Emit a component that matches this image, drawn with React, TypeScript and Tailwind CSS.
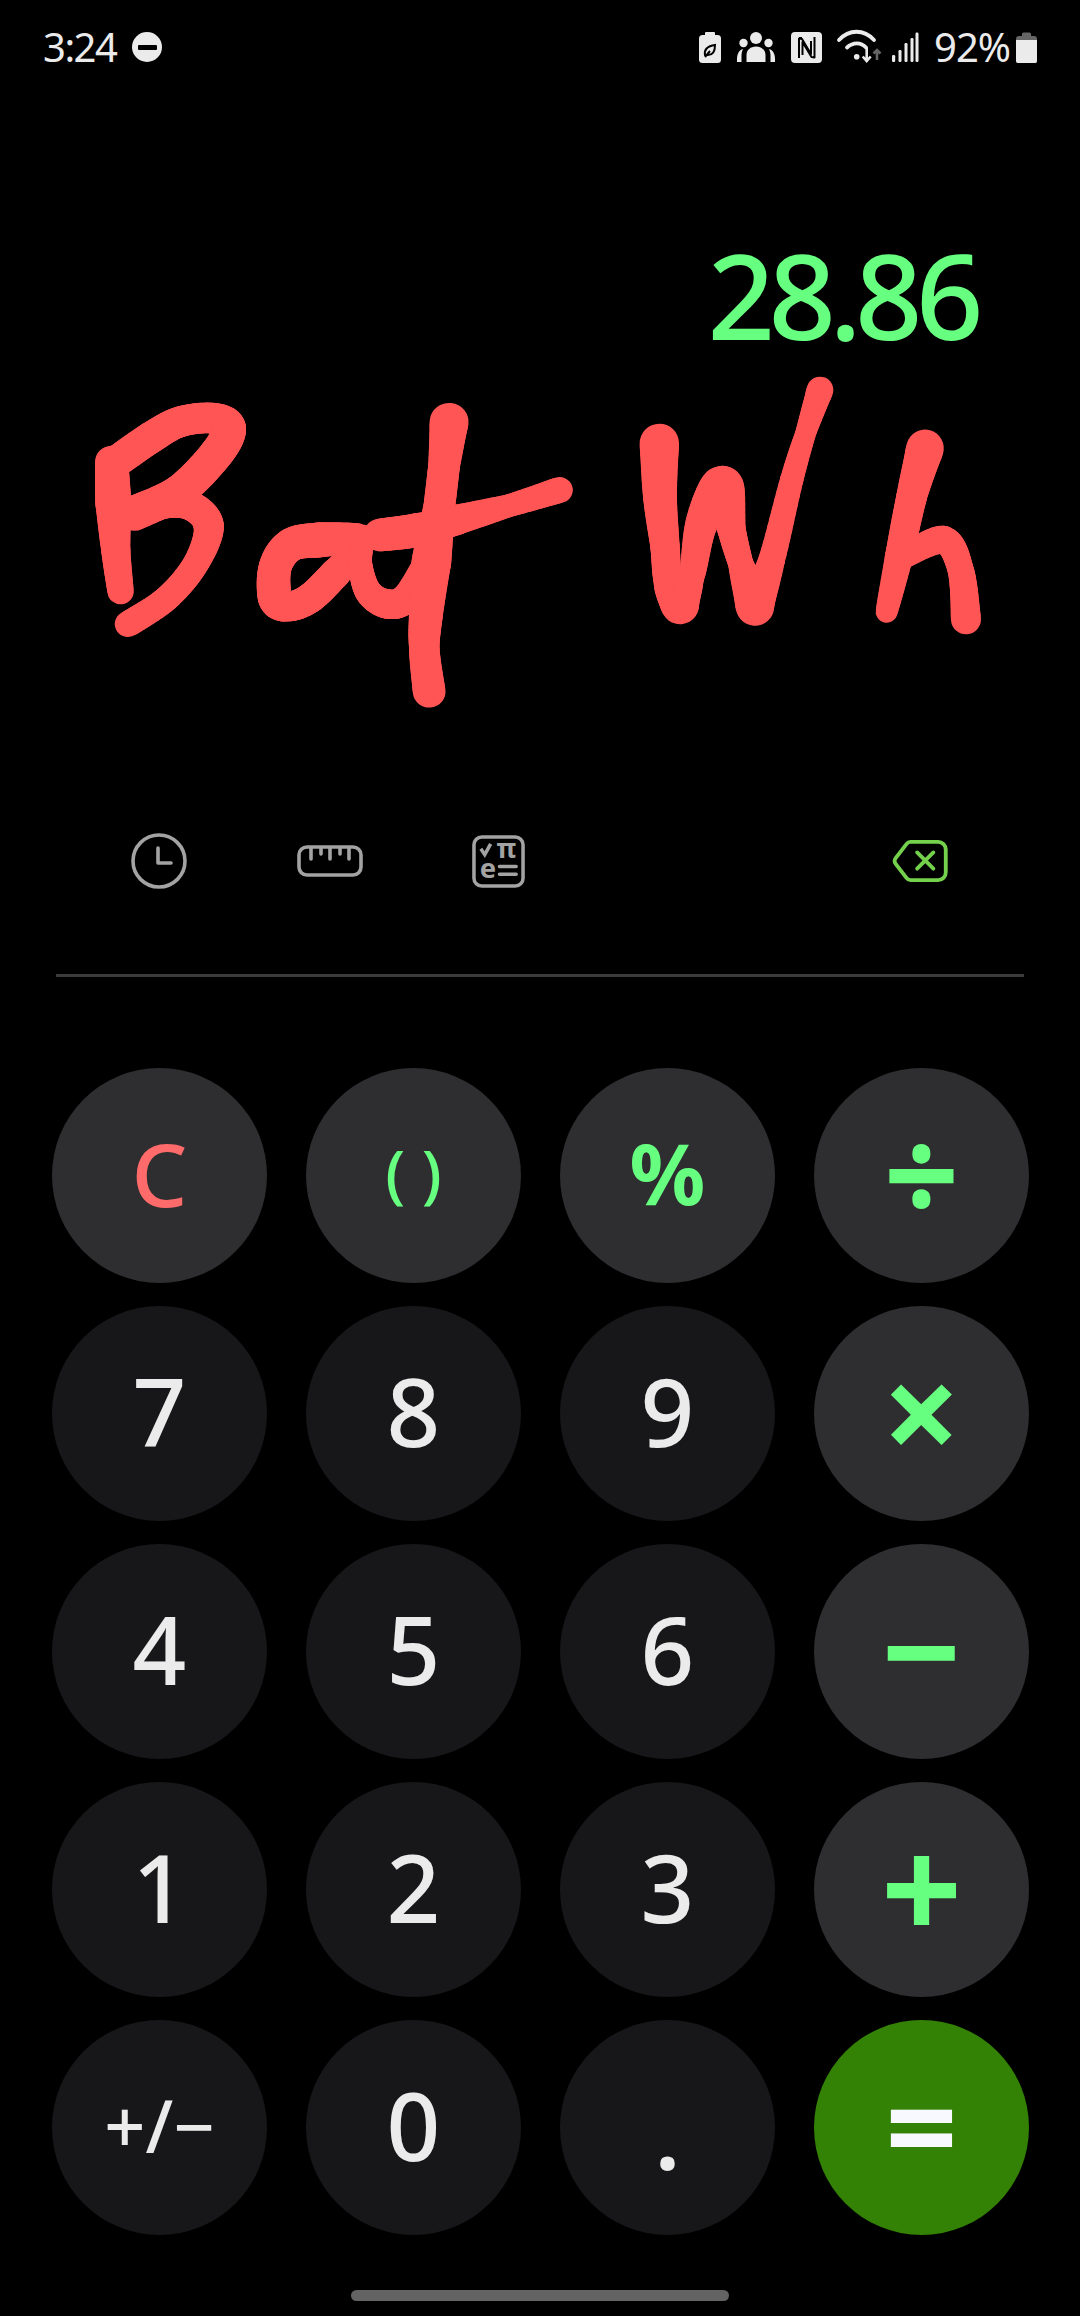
import React from 'react';

type Pt = [number, number, number];

// freehand pen stroke: catmull-rom through the points, width varies along it
function Ink({ pts }: { pts: Pt[] }) {
  const out: React.ReactNode[] = [];
  const at = (i: number) => pts[Math.max(0, Math.min(pts.length - 1, i))];
  let last: [number, number] | null = null;
  for (let i = 0; i < pts.length - 1; i++) {
    const [a, b, c, d] = [at(i - 1), at(i), at(i + 1), at(i + 2)];
    for (let s = 0; s <= 10; s++) {
      const t = s / 10;
      const f = (k: number) =>
        0.5 * (2 * b[k] + (c[k] - a[k]) * t + (2 * a[k] - 5 * b[k] + 4 * c[k] - d[k]) * t * t + (3 * b[k] - a[k] - 3 * c[k] + d[k]) * t * t * t);
      const x = f(0);
      const y = f(1);
      const w = b[2] + (c[2] - b[2]) * t;
      if (last) out.push(<line key={`${i}-${s}`} x1={last[0]} y1={last[1]} x2={x} y2={y} strokeWidth={w} />);
      last = [x, y];
    }
  }
  return <g stroke="#ff5555" strokeLinecap="round" fill="none">{out}</g>;
}

function Bat() {
  return (
    <svg className="absolute left-[60px] top-[256px] w-[540px] h-[380px]" viewBox="0 0 1568 1140" preserveAspectRatio="none">
      <Ink pts={[[150, 335, 95], [155, 460, 105], [162, 600, 85], [176, 725, 76]]} />
      <Ink pts={[[150, 345, 95], [265, 262, 95], [350, 215, 92], [445, 205, 92], [490, 235, 100], [455, 310, 100], [345, 425, 100], [215, 490, 105]]} />
      <Ink pts={[[215, 490, 95], [310, 462, 85], [385, 470, 88], [432, 530, 88], [395, 640, 76], [310, 745, 76], [198, 822, 78]]} />
      <Ink pts={[[860, 565, 90], [750, 570, 105], [670, 585, 100], [625, 650, 95], [625, 745, 100], [660, 770, 88], [725, 745, 90], [800, 670, 90], [860, 600, 72]]} />
      <Ink pts={[[880, 560, 72], [872, 640, 68], [895, 725, 78], [950, 762, 88], [1005, 745, 88], [1060, 650, 80]]} />
      <Ink pts={[[930, 555, 98], [1040, 540, 102], [1150, 510, 92], [1310, 465, 68], [1450, 420, 78]]} />
      <Ink pts={[[1130, 215, 115], [1115, 350, 92], [1100, 480, 92], [1078, 640, 115], [1062, 800, 98], [1058, 900, 88], [1072, 1025, 95]]} />
    </svg>
  );
}

function Wh() {
  return (
    <svg className="absolute left-[600px] top-[136px] w-[420px] h-[420px]" viewBox="0 0 1260 1260">
      <Ink pts={[[178, 640, 120], [180, 800, 102], [195, 950, 88], [205, 1060, 85], [240, 1125, 115]]} />
      <Ink pts={[[240, 1125, 115], [275, 1040, 75], [305, 880, 95], [368, 770, 125], [395, 900, 85], [425, 1010, 75], [465, 1130, 115]]} />
      <Ink pts={[[465, 1130, 115], [515, 990, 80], [575, 750, 70], [620, 600, 62], [660, 480, 80]]} />
      <Ink pts={[[975, 655, 115], [935, 800, 92], [897, 980, 85], [860, 1145, 66]]} />
      <Ink pts={[[910, 980, 70], [1030, 930, 85], [1082, 1020, 78], [1098, 1168, 90]]} />
    </svg>
  );
}

function StatusIcons() {
  return (
    <div className="flex items-center h-[34px]">
      {/* battery saver */}
      <svg width="22" height="31" viewBox="0 0 22 31" className="mr-[16px]">
        <rect x="6" y="0" width="10" height="4" rx="1" fill="#ebebeb" />
        <rect x="0" y="3" width="22" height="28" rx="3.5" fill="#ebebeb" />
        <path d="M6 23c-1-5 2-9 10-10 0 6-2 10-7 10-1 0-2 0-3 0zm0 2l5-6" fill="none" stroke="#000" strokeWidth="2" />
      </svg>
      {/* people */}
      <svg width="38" height="30" viewBox="0 0 38 30" fill="#ebebeb" className="mr-[16px]">
        <circle cx="19" cy="6" r="6" />
        <circle cx="6.5" cy="11" r="4.2" />
        <circle cx="31.5" cy="11" r="4.2" />
        <path d="M9.5 30v-7c0-5 4-8.500 9.500-8.500s9.500 3.500 9.500 8.500v7z" />
        <path d="M0 30v-3c0-5 2-9 6-10-1 2-1.500 4-1.500 6v7zM38 30v-3c0-5-2-9-6-10 1 2 1.500 4 1.500 6v7z" />
      </svg>
      {/* nfc */}
      <svg width="31" height="31" viewBox="0 0 31 31" className="mr-[14px]">
        <rect width="31" height="31" rx="4" fill="#ebebeb" />
        <path d="M8 26V6.500l3 .5 9 15V9M8 6h3M23.500 5v20.500l-3-.5-9-15v13" fill="none" stroke="#000" strokeWidth="2" strokeLinejoin="round" />
      </svg>
      {/* wifi */}
      <svg width="48" height="38" viewBox="0 0 48 38" fill="none" className="mr-[8px]">
        <path d="M3 12c10-11 25-11 35 0M11 19.500c6-5.500 14-5.500 19 0" stroke="#ebebeb" strokeWidth="3.800" strokeLinecap="round" />
        <circle cx="20.700" cy="28.700" r="2.800" fill="#ebebeb" />
        <path d="M30.700 20v13m-4-4.500l4 4.500 4-4.500" stroke="#ebebeb" strokeWidth="2.600" />
        <path d="M41 32V22m-3.500 3.500L41 22l3.500 3.500" stroke="#666" strokeWidth="2.600" />
      </svg>
      {/* signal */}
      <svg width="28" height="31" viewBox="0 0 28 31" fill="#ebebeb" className="mr-[14px]">
        <rect x="0" y="23" width="3.200" height="7" rx="1.200" />
        <rect x="6.500" y="18" width="3" height="12" rx="1.200" />
        <rect x="12.500" y="11" width="3" height="19" rx="1.200" />
        <rect x="18.500" y="6" width="3" height="24" rx="1.200" />
        <rect x="23.500" y="0.500" width="3" height="29.500" rx="1.200" />
      </svg>
      <span className="text-[40px] leading-none tracking-[-1px] text-[#ebebeb] mr-[6px]">92%</span>
      {/* battery */}
      <svg width="21" height="31" viewBox="0 0 21 31">
        <path d="M6 4V2a1.500 1.500 0 0 1 1.500-1.500h6A1.500 1.500 0 0 1 15 2v2z" fill="#666" />
        <path d="M0 7a3 3 0 0 1 3-3h15a3 3 0 0 1 3 3v22a2 2 0 0 1-2 2H2a2 2 0 0 1-2-2z" fill="#666" />
        <path d="M0 8h21v21a2 2 0 0 1-2 2H2a2 2 0 0 1-2-2z" fill="#ebebeb" />
      </svg>
    </div>
  );
}

function Toolbar() {
  return (
    <div className="flex items-center h-[62px] text-[#a3a3a3]">
      <svg width="56" height="56" viewBox="0 0 56 56" fill="none" stroke="currentColor" strokeWidth="3.600" strokeLinecap="round" strokeLinejoin="round" className="ml-[131px]">
        <circle cx="28" cy="28" r="26" />
        <path d="M27 15v15h13" />
      </svg>
      <svg width="66" height="32" viewBox="0 0 66 32" fill="none" stroke="currentColor" strokeWidth="3.600" strokeLinecap="round" className="ml-[110px]">
        <rect x="2" y="2" width="62" height="28" rx="8" />
        <path d="M14 3v11M24 3v6M33 3v11M43 3v6M52 3v11" />
      </svg>
      <svg width="53" height="53" viewBox="0 0 54 54" fill="none" className="ml-[109px] overflow-visible">
        <rect x="2" y="2" width="50" height="50" rx="8" stroke="currentColor" strokeWidth="3.600" />
        <path d="M9 14l4 6 6-11" stroke="currentColor" strokeWidth="3.600" />
        <text x="25" y="23" fontSize="27" fontWeight="700" fontFamily="Noto Sans, sans-serif" fill="currentColor">π</text>
        <text x="8" y="44" fontSize="28" fontWeight="700" fontFamily="Noto Sans, sans-serif" fill="currentColor">e</text>
        <path d="M28 32h17M28 40h17" stroke="currentColor" strokeWidth="3.600" strokeLinecap="round" />
      </svg>
      <svg width="56" height="42" viewBox="0 0 58 44" fill="none" stroke="#74d14c" strokeWidth="4" strokeLinecap="round" strokeLinejoin="round" className="ml-[367px]">
        <path d="M19 2h29a8 8 0 0 1 8 8v24a8 8 0 0 1-8 8H19a5 5 0 0 1-4-2L3.500 25a5 5 0 0 1 0-6L15 4a5 5 0 0 1 4-2z" />
        <path d="M26 13l17 17M43 13L26 30" />
      </svg>
    </div>
  );
}

const num = 'bg-[#171719] text-[#ebebeb] font-medium';
const fn = 'bg-[#2e2e30] text-[#66ff80]';

const keys = [
  { t: 'C', c: 'bg-[#2e2e30] text-[#ff6b6b] text-[88px] font-medium pb-[6px]' },
  { t: '( )', c: `${fn} text-[64px] font-medium pb-[6px]` },
  { t: '%', c: `${fn} text-[84px] font-bold pb-[6px]` },
  { t: '÷', c: `${fn} text-[132px] font-bold pb-[7px]` },
  { t: '7', c: `${num} text-[94px] pb-[6px]` },
  { t: '8', c: `${num} text-[94px] pb-[6px]` },
  { t: '9', c: `${num} text-[94px] pb-[6px]` },
  { t: '×', c: `${fn} text-[137px] font-bold pb-[7px]` },
  { t: '4', c: `${num} text-[94px] pb-[6px]` },
  { t: '5', c: `${num} text-[94px] pb-[6px]` },
  { t: '6', c: `${num} text-[94px] pb-[6px]` },
  { t: '−', c: `${fn} text-[138px] font-bold pb-[7px]` },
  { t: '1', c: `${num} text-[94px] pb-[6px]` },
  { t: '2', c: `${num} text-[94px] pb-[6px]` },
  { t: '3', c: `${num} text-[94px] pb-[6px]` },
  { t: '+', c: `${fn} text-[142px] font-bold pb-[7px]` },
  { t: '+/−', c: `${num} text-[72px] pb-[6px]` },
  { t: '0', c: `${num} text-[94px] pb-[6px]` },
  { t: '.', c: `${num} text-[94px] font-semibold pt-[12px]` },
  { t: '=', c: 'bg-[#338205] text-[#f8f8ff] text-[126px] font-bold pb-[7px]' },
];

export default function App() {
  return (
    <div className="relative w-[1080px] h-[2316px] bg-black overflow-hidden font-['Noto_Sans',sans-serif]">
      {/* status bar */}
      <div className="flex items-center justify-between h-[94px] pl-[43px] pr-[43px]">
        <div className="flex items-center">
          <span className="text-[40px] leading-none tracking-[-1.5px] text-[#ebebeb]">3:24</span>
          <span className="ml-[16px] w-[30px] h-[30px] rounded-full bg-[#ebebeb] flex items-center justify-center">
            <span className="w-[19px] h-[5px] bg-black rounded-[1px]" />
          </span>
        </div>
        <StatusIcons />
      </div>

      {/* display + handwriting */}
      <div className="relative pt-[736px]">
        <div className="absolute right-[103px] top-[130px] text-[118px] font-medium leading-[1.2] tracking-[-6.5px] text-[#66ff80]">28.86</div>
        <Bat />
        <Wh />
        <Toolbar />
      </div>

      <div className="h-[3px] bg-[#3b3b3b] mx-[56px] mt-[82px]" />

      {/* keypad */}
      <div className="grid grid-cols-[repeat(4,215px)] auto-rows-[215px] gap-x-[39px] gap-y-[23px] mt-[91px] ml-[52px]">
        {keys.map(k => (
          <div key={k.t} className={`rounded-full flex items-center justify-center leading-none ${k.c}`}>{k.t}</div>
        ))}
      </div>

      {/* home indicator */}
      <div className="w-[378px] h-[11px] rounded-full bg-[#636363] mx-auto mt-[55px]" />
    </div>
  );
}
